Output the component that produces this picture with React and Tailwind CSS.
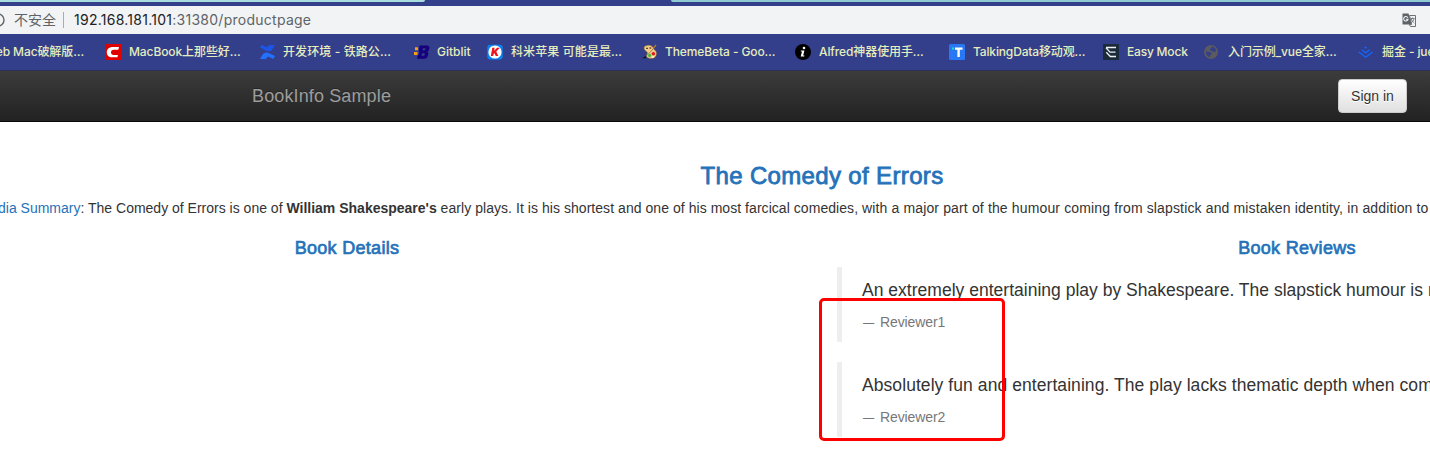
import React from "react";

const ICON = "h-4 w-4 shrink-0";

function RedC() {
  return (
    <svg className={ICON} viewBox="0 0 16 16">
      <rect width="16" height="16" fill="#df0000" />
      <path d="M14 3H7.500C4 3 1.800 5.300 1.800 8.300c0 3 2 5 5.200 5h5.500l.4-2.400H8.600C7 10.900 6 10 6 8.300c0-1.600 1-2.500 2.700-2.500h4.600z" fill="#fff" />
    </svg>
  );
}

function Confluence() {
  return (
    <svg className={ICON} viewBox="0 0 16 16">
      <path d="M0 3.600 1.800.8l3.900 2.100c1 .5 1.600.3 2.300-.6l.9-1.300h5.800l-1.900 3.500c-1.600 3-3.900 3.500-6.800 2.100z" fill="#1d55e8" />
      <path d="M15 12 13.200 15 9.300 12.900c-1-.5-1.600-.3-2.300.6l-1 1.400H0l2.200-3.600c1.800-2.900 4-3.400 6.900-2z" fill="#2470ff" />
    </svg>
  );
}

function Gitblit() {
  return (
    <svg className={ICON} viewBox="0 0 16 16">
      <path d="M1 3.300h3v3H1zM0 8h3.500v3H0z" fill="#ff9a1a" />
      <path fillRule="evenodd" d="M5.500 1.500H13c2 0 2.700 1.300 2.300 3.200-.3 1.600-1 2.600-2.200 3.100 1 .6 1.400 1.700 1 3.300-.5 2.400-1.800 3.600-4.200 3.600H3l1-4.200h1l.6-3H4.800zM9 4.300l-.5 2.200h1.700c1.500 0 2-2.200.6-2.200zM8 9.200l-.6 2.600h2c1.500 0 2-2.600.5-2.600z" fill="#16007c" />
    </svg>
  );
}

function RedK() {
  return (
    <svg className={ICON} viewBox="0 0 16 16">
      <rect x=".3" y=".8" width="15.400" height="14.700" rx="3" fill="#0a84f5" />
      <circle cx="8" cy="8" r="6.600" fill="#fff" />
      <path d="M5.300 3.700h2.400l-.6 3 3-3h2.800L9.300 7.400l2 4.700H8.800L7.400 9.200l-.8.800-.4 2.100H3.800z" fill="#ee1420" />
    </svg>
  );
}

function Palette() {
  return (
    <svg className={ICON} viewBox="0 0 16 16">
      <path d="M2 4C2 1.500 5.500.8 8.500 1.500c2.500.6 2.500 2.800 3.800 4.200 1.500 1 2.400 2.300 2.200 4.300-.3 3-2.500 4.500-5.500 4.500-2.800 0-4.700-1.200-4.500-3 .1-1.500 1.200-1.700.9-2.800C5 7.500 2 6.500 2 4z" fill="#f0cb85" stroke="#8a6230" strokeWidth=".5" />
      <path d="M4 3.800h2v1.300H4zM7.500 3.300h1.700v1.400H7.500z" fill="#6b4526" />
      <path d="M11 5 8 8.300 4 12.300" fill="none" stroke="#8a6230" strokeWidth=".7" />
      <path d="M14 1 11 4.500" fill="none" stroke="#b8782c" strokeWidth="1.300" />
      <circle cx="11.400" cy="9.800" r="1.800" fill="#dc1c22" />
      <circle cx="7.600" cy="11.400" r="1.600" fill="#43bd35" />
      <circle cx="11" cy="13" r=".9" fill="#fff7dc" />
      <path d="M0 14.300 4 12v2.200z" fill="#111" />
    </svg>
  );
}

function InfoDot() {
  return (
    <svg className={ICON} viewBox="0 0 16 16">
      <circle cx="8" cy="8" r="8" fill="#000" />
      <circle cx="9" cy="4" r="1.300" fill="#fff" />
      <path d="M6 6.400h3.400l-1.200 5h1.300l-.3 1.200H5.700L7 7.600H5.700z" fill="#fff" />
    </svg>
  );
}

function TalkingData() {
  return (
    <svg className={ICON} viewBox="0 0 16 16">
      <rect width="16" height="16" rx="1.500" fill="#2878f5" />
      <path d="M3 3.500h2v2H3z" fill="#1fe0b2" />
      <path d="M6 3.500h7.500v2.300h-2.700V13H8.400V5.800H6z" fill="#fff" />
    </svg>
  );
}

function EasyMock() {
  return (
    <svg className={ICON} viewBox="0 0 16 16">
      <rect width="16" height="16" rx=".6" fill="#1c2b3a" />
      <path d="M3 3.500h10M3 3.800l4 4.300h5.500M3.300 8.300l4 4.200H13" fill="none" stroke="#eef1f3" strokeWidth="1.300" />
    </svg>
  );
}

function Globe() {
  return (
    <svg className={ICON} viewBox="0 0 16 16">
      <circle cx="7" cy="8" r="7" fill="#5a5a60" />
      <path d="M2 8c.8-.6 3.500-.3 4.800.5 1.200.6 1 1.800-.2 2.300-.7.400-.4 1.600-1.200 2.200C3.300 12.200 1.900 10.200 2 8zM7.500 2.600c2.700.2 4.500 2.300 4.700 4.700-.8 1-1.700.3-2.700.3-.9.200-1.200-.8-2.300-.9-1.200-.2-1.700-1.200-.8-1.900.8-.5 1.300-1.200 1.100-2.200z" fill="#333f8b" />
    </svg>
  );
}

function Juejin() {
  return (
    <svg className={ICON} viewBox="0 0 16 16">
      <path d="M6.300 3.600 7.700 2.500l1.400 1.100-1.400 1.100z" fill="#1268ff" />
      <path d="M3.900 5.800l3.800 3 3.800-3M.8 8l6.900 5.300L14.600 8" fill="none" stroke="#1268ff" strokeWidth="1.300" />
    </svg>
  );
}

const BOOKMARKS = [
  { icon: RedC, label: "MacBook上那些好…", box: "w-[155px] gap-2", text: "tracking-[-0.1px]" },
  { icon: Confluence, label: "开发环境 - 铁路公…", box: "w-[154px] gap-[7px]", text: "tracking-[0.1px]" },
  { icon: Gitblit, label: "Gitblit", box: "w-[73px] gap-[7px]", text: "tracking-[0px]" },
  { icon: RedK, label: "科米苹果 可能是最…", box: "w-[155px] gap-2", text: "tracking-[0.1px]" },
  { icon: Palette, label: "ThemeBeta - Goo…", box: "w-[153px] gap-[7px]", text: "tracking-[-0.1px]" },
  { icon: InfoDot, label: "Alfred神器使用手…", box: "w-[154px] gap-2", text: "tracking-[-0.1px]" },
  { icon: TalkingData, label: "TalkingData移动观…", box: "w-[154px] gap-2", text: "tracking-[-0.15px]" },
  { icon: EasyMock, label: "Easy Mock", box: "w-[101px] gap-2", text: "tracking-[-0.2px]" },
  { icon: Globe, label: "入门示例_vue全家…", box: "w-[154px] gap-2", text: "tracking-[-0.1px]" },
  { icon: Juejin, label: "掘金 - juejin", box: "w-[154px] gap-2", text: "tracking-[-0.1px]" },
];

function TabStrip() {
  return (
    <div className="flex h-1.5 justify-between bg-[#333f8b]">
      <div className="h-0.5 w-[425px] rounded-br-[3px] bg-[#a9dcdc]" />
      <div className="h-0.5 w-[759px] rounded-bl-[3px] bg-[#8fcbd0]" />
    </div>
  );
}

function AddressBar() {
  return (
    <div className="flex h-7 items-center bg-[#f1f3f4] font-['Inter','Noto_Sans_CJK_SC',sans-serif] text-sm text-[#5f6368]">
      <svg className="-ml-[9px] h-3.5 w-3.5 shrink-0" viewBox="0 0 14 14">
        <circle cx="7" cy="7" r="6" fill="none" stroke="#5f6368" strokeWidth="1.400" />
      </svg>
      <span className="ml-[9px] w-[43px]">不安全</span>
      <span className="ml-1.5 h-4 w-px bg-[#a8abaf]" />
      <span className="ml-2.5 tracking-[0.26px]">
        <span className="text-[#202124]">192.168.181.101</span>:31380/productpage
      </span>
      <svg className="mr-[13px] ml-auto h-4 w-4" viewBox="0 0 16 16">
        <path d="M1.500 1.500h6l3.500 11H1.500z" fill="#5f6368" />
        <path d="M8.500 3.500h6v11h-5l-1.200-2h2.300z" fill="#f1f3f4" stroke="#6e7277" />
        <path d="M6.800 5.700A2.200 2.200 0 1 0 7 7.300H4.900" fill="none" stroke="#f1f3f4" strokeWidth="1.100" />
        <path d="M9.500 6.500h4M11.500 5.500v1M13 6.500c-.4 2-1.500 3.500-3 4.300M10.300 7c.5 1.700 1.700 3 3 4" fill="none" stroke="#6e7277" strokeWidth=".9" />
      </svg>
    </div>
  );
}

function BookmarkBar() {
  return (
    <div className="flex h-9 items-center overflow-hidden bg-[#333f8b] font-['Inter','Noto_Sans_CJK_SC',sans-serif] text-xs font-medium whitespace-nowrap text-[#e6edbd]">
      <div className="flex w-[105px] shrink-0 justify-end pr-[21px]">
        <span className="tracking-[-0.1px]">Web Mac破解版…</span>
      </div>
      {BOOKMARKS.map(({ icon: Icon, label, box, text }) => (
        <div key={label} className={`flex shrink-0 items-center ${box}`}>
          <Icon />
          <span className={text}>{label}</span>
        </div>
      ))}
    </div>
  );
}

function Navbar() {
  return (
    <nav className="flex h-[52px] items-center justify-between border-t border-b border-t-[#2b3057] border-b-[#080808] bg-linear-to-b from-[#3c3c3c] to-[#222222] pr-[23px] pl-[252px]">
      <a className="text-lg tracking-[0.13px] text-[#9d9d9d] [text-shadow:0_-1px_0_rgba(0,0,0,0.25)]">BookInfo Sample</a>
      <button className="h-[34px] w-[69px] rounded border border-[#cccccc] bg-linear-to-b from-white to-[#e0e0e0] text-sm text-[#333333] [text-shadow:0_1px_0_#fff]">
        Sign in
      </button>
    </nav>
  );
}

function Review({ text, author, tracking }) {
  return (
    <blockquote className="mb-5 h-[75px] border-l-[5px] border-[#eeeeee] px-5 pt-[11px]">
      <p className={`text-[17.5px] leading-[25px] ${tracking}`}>{text}</p>
      <small className="mt-[9px] flex text-sm leading-5 text-[#777777]">
        <span className="w-[18px] origin-left translate-x-px scale-x-80">—</span>
        <span className="tracking-[-0.1px]">{author}</span>
      </small>
    </blockquote>
  );
}

export default function App() {
  return (
    <div className="relative h-[475px] w-[1430px] overflow-hidden bg-white font-['Liberation_Sans',Arial,sans-serif] text-[#333333]">
      <TabStrip />
      <AddressBar />
      <BookmarkBar />
      <Navbar />
      <main className="-ml-32 w-[1900px] whitespace-nowrap">
        <h3 className="pt-[41px] text-center text-2xl leading-[26px] tracking-[0.35px] text-[#2572b9] [-webkit-text-stroke:0.8px_#2572b9]">The Comedy of Errors</h3>
        <p className="mt-[9px] pl-[84px] text-sm leading-5">
          <a className="text-[#2572b9]">Wikipedia Summary</a>: The Comedy of Errors is one of <b>William Shakespeare's</b>{" "}
          <span className="tracking-[0.05px]">early plays. It is his shortest and one of his most farcical comedies, </span>
          <span className="tracking-[0.14px]">with a major part of the humour coming from slapstick and mistaken identity, in addition to</span>
        </p>
        <div className="mt-5 grid grid-cols-2">
          <section className="px-[15px]">
            <h4 className="text-center text-lg leading-5 tracking-[0.3px] text-[#2572b9] [-webkit-text-stroke:0.7px_#2572b9]">Book Details</h4>
          </section>
          <section className="px-[15px]">
            <h4 className="mb-[9px] text-center text-lg leading-5 tracking-[0.3px] text-[#2572b9] [-webkit-text-stroke:0.7px_#2572b9]">Book Reviews</h4>
            <Review tracking="tracking-[0.015px]" text="An extremely entertaining play by Shakespeare. The slapstick humour is refreshing!" author="Reviewer1" />
            <Review tracking="tracking-[0.07px]" text="Absolutely fun and entertaining. The play lacks thematic depth when compared to other plays by Shakespeare." author="Reviewer2" />
          </section>
        </div>
      </main>
      <div className="absolute top-[298px] left-[819px] h-[143px] w-[186px] rounded-[5px] border-3 border-[#ff0000]" />
    </div>
  );
}
